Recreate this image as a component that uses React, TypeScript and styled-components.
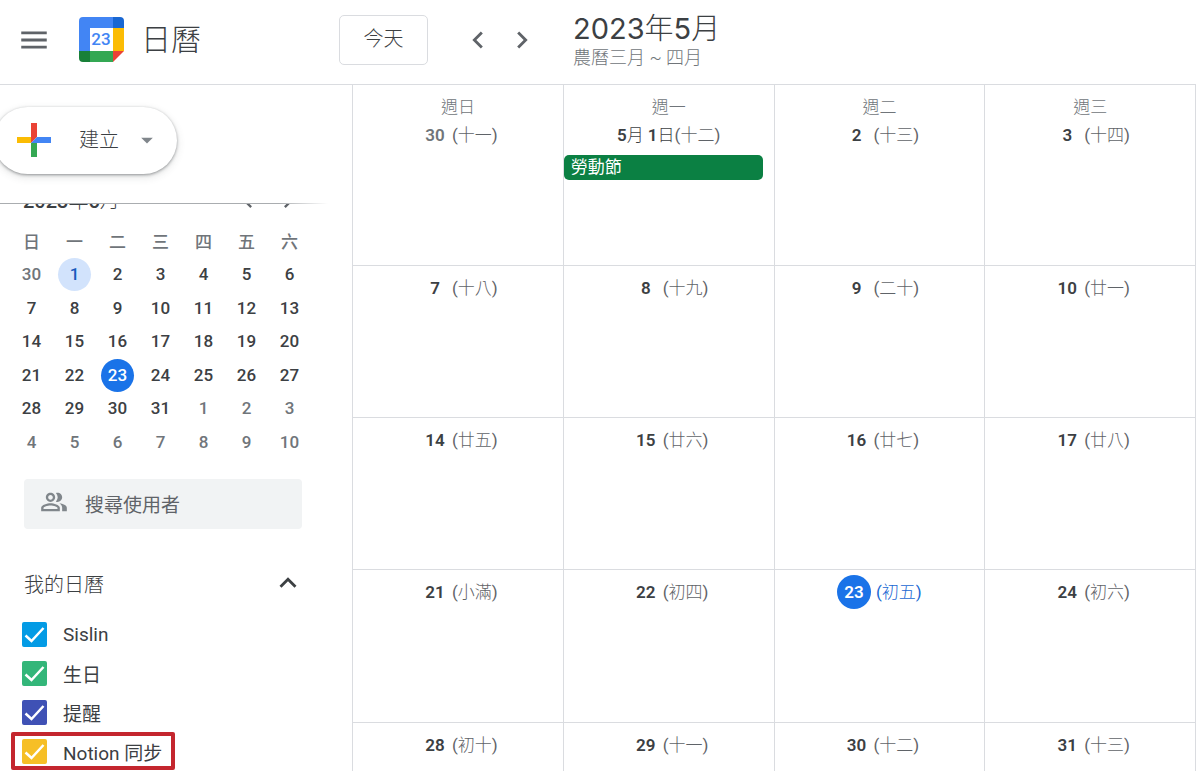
import React from "react";
import styled, { createGlobalStyle } from "styled-components";
import {
  MdArrowDropDown,
  MdChevronLeft,
  MdChevronRight,
  MdKeyboardArrowUp,
  MdMenu,
  MdOutlinePeopleAlt,
} from "react-icons/md";

const color = {
  text: "#3c4043",
  muted: "#70757a",
  icon: "#5f6368",
  line: "#dadce0",
  blue: "#1a73e8",
  holiday: "#0b8043",
};

const GlobalStyle = createGlobalStyle`
  *, *::before, *::after { box-sizing: border-box; }
  body {
    margin: 0;
    background: #fff;
    color: ${color.text};
    font-family: Roboto, "Noto Sans CJK TC", sans-serif;
    font-size: 17px;
  }
  button, input { font: inherit; color: inherit; }
  h1, h2, p, ul { margin: 0; padding: 0; font-weight: 400; }
`;

const Page = styled.div`
  display: flex;
  flex-direction: column;
  height: 100vh;
  overflow: hidden;
`;

/* Top bar */

const TopBar = styled.header`
  display: flex;
  align-items: center;
  flex: none;
  height: 85px;
  padding-bottom: 5px;
  border-bottom: 1px solid ${color.line};
`;

const Brand = styled.div`
  display: flex;
  align-items: center;
  flex: 0 0 339px;
  padding-left: 17px;
`;

const IconButton = styled.button<{ $tone?: string }>`
  display: flex;
  align-items: center;
  justify-content: center;
  padding: 0;
  border: 0;
  background: none;
  color: ${(p) => p.$tone ?? color.icon};
  cursor: pointer;
`;

const LogoMark = styled.svg`
  width: 45px;
  height: 45px;
  margin: 0 17px 0 28px;
`;

const BrandName = styled.span`
  font-size: 30px;
  line-height: 40px;
  font-weight: 300;
`;

const TodayButton = styled.button`
  width: 89px;
  height: 50px;
  padding: 0 0 4px;
  border: 1px solid ${color.line};
  border-radius: 5px;
  background: #fff;
  font-size: 20px;
  font-weight: 300;
  cursor: pointer;
`;

const Pager = styled.nav`
  display: flex;
  gap: 10px;
  margin: 0 34px 0 33px;
`;

const Heading = styled.div`
  display: flex;
  flex-direction: column;
`;

const MonthTitle = styled.h1`
  font-family: Inter, "Noto Sans CJK TC", sans-serif;
  font-size: 29px;
  line-height: 36px;

  span { font-weight: 300; }
`;

const LunarTitle = styled.p`
  color: ${color.muted};
  font-size: 18px;
  line-height: 22px;
  font-weight: 300;
`;

/* Body */

const Body = styled.div`
  display: flex;
  flex: 1;
  min-height: 0;
`;

const Sidebar = styled.aside`
  display: flex;
  flex-direction: column;
  flex: 0 0 352px;
  overflow: hidden;
`;

const CreateArea = styled.div`
  flex: none;
  padding: 22px 0 29px;
`;

const CreateButton = styled.button`
  display: flex;
  align-items: center;
  width: 183px;
  height: 67px;
  margin-left: -6px;
  padding: 0 16px 2px 23px;
  border: 0;
  border-radius: 34px;
  background: #fff;
  box-shadow: 0 1px 3px rgba(60, 64, 67, 0.5), 0 3px 8px rgba(60, 64, 67, 0.15);
  font-size: 20px;
  font-weight: 300;
  cursor: pointer;

  span { flex: 1; padding: 0 0 3px 28px; text-align: left; }
`;

const ScrollEdge = styled.div`
  flex: none;
  width: 328px;
  height: 1px;
  background: linear-gradient(to right, #aaadb0 85%, transparent);
`;

const ScrollArea = styled.div`
  flex: 1;
  min-height: 0;
  overflow: hidden;
`;

const MiniHeader = styled.div`
  display: flex;
  align-items: center;
  height: 34px;
  margin: -20px 50px 8px 23px;
`;

const MiniTitle = styled.h2`
  flex: 1;
  font-size: 20px;
  line-height: 34px;
  font-weight: 500;

  span { font-weight: 300; }
`;

const MiniPager = styled.div`
  display: flex;
  gap: 12px;
`;

const MiniTable = styled.table`
  width: 301px;
  margin-left: 10px;
  table-layout: fixed;
  border-spacing: 0;
  text-align: center;

  th, td { padding: 0; }
  th {
    height: 32px;
    color: ${color.muted};
    font-weight: 500;
    line-height: 32px;
  }
  td { height: 33px; line-height: 33px; }
  tbody tr:nth-child(even) td { height: 34px; }
`;

const MiniDay = styled.span<{ $kind: "in" | "out" | "first" | "today" }>`
  display: block;
  width: 33px;
  height: 33px;
  margin: 0 auto;
  border-radius: 50%;
  font-weight: 500;
  color: ${(p) =>
    ({ in: color.text, out: color.muted, first: "#185abc", today: "#fff" })[p.$kind]};
  background: ${(p) =>
    ({ in: "none", out: "none", first: "#d2e3fc", today: color.blue })[p.$kind]};
`;

const SearchBox = styled.label`
  display: flex;
  align-items: center;
  height: 50px;
  margin: 20px 50px 0 24px;
  padding-left: 16px;
  border-radius: 4px;
  background: #f1f3f4;
  color: #80868b;

  svg { margin-bottom: 4px; }
`;

const SearchInput = styled.input`
  flex: 1;
  min-width: 0;
  margin-left: 17px;
  padding: 2px 0 0;
  border: 0;
  outline: 0;
  background: none;
  color: ${color.text};
  font-size: 19px;

  &::placeholder { color: ${color.icon}; opacity: 1; }
`;

const SectionHeader = styled.div`
  display: flex;
  align-items: center;
  justify-content: space-between;
  height: 40px;
  margin: 34px 47px 12px 24px;
`;

const SectionTitle = styled.h2`
  font-size: 20px;
  font-weight: 300;
`;

const CalendarList = styled.ul`
  list-style: none;
`;

const CalendarItem = styled.li<{ $marked?: boolean }>`
  position: relative;
  height: 39px;
  padding-left: 22px;

  &::after {
    content: "";
    display: ${(p) => (p.$marked ? "block" : "none")};
    position: absolute;
    top: 0;
    left: 11px;
    width: 164px;
    height: 38px;
    border: 4px solid #c4262e;
    border-radius: 2px;
    pointer-events: none;
  }
`;

const CalendarLabel = styled.label`
  display: inline-flex;
  align-items: center;
  gap: 16px;
  height: 39px;
  font-size: 19px;
  cursor: pointer;
`;

const CheckWrap = styled.span`
  display: grid;
  width: 25px;
  height: 25px;

  > * { grid-area: 1 / 1; }
  svg { width: 25px; height: 25px; pointer-events: none; }
`;

const CheckInput = styled.input<{ $fill: string }>`
  appearance: none;
  width: 25px;
  height: 25px;
  margin: 0;
  border: 2px solid ${(p) => p.$fill};
  border-radius: 2px;

  &:checked { background: ${(p) => p.$fill}; }
  &:not(:checked) + svg { visibility: hidden; }
`;

/* Month grid */

const MonthArea = styled.main`
  flex: 1;
  min-width: 0;
  overflow: hidden;
`;

const MonthTable = styled.table`
  width: 100%;
  table-layout: fixed;
  border-spacing: 0;
  border-right: 1px solid ${color.line};
`;

const DayCell = styled.td<{ $first?: boolean }>`
  height: ${(p) => (p.$first ? 181 : 152)}px;
  padding: 5px 0 0;
  border-left: 1px solid ${color.line};
  border-bottom: 1px solid ${color.line};
  vertical-align: top;

  tr:nth-child(4) & { height: 153px; }
`;

const Weekday = styled.div`
  height: 28px;
  line-height: 34px;
  color: ${color.muted};
  text-align: center;
  font-weight: 300;
`;

const DateLine = styled.div<{ $today?: boolean }>`
  display: flex;
  justify-content: center;
  gap: ${(p) => (p.$today ? 5 : 0)}px;
  height: 34px;
  line-height: 34px;
  color: ${(p) => (p.$today ? "#1967d2" : color.icon)};
`;

const DayNumber = styled.span<{ $kind: "in" | "out" | "long" | "today" }>`
  width: ${(p) => (p.$kind === "long" ? "auto" : "34px")};
  height: 34px;
  border-radius: 50%;
  text-align: center;
  font-weight: 600;
  color: ${(p) =>
    p.$kind === "out" ? color.muted : p.$kind === "today" ? "#fff" : color.text};
  background: ${(p) => (p.$kind === "today" ? color.blue : "none")};

  span { font-weight: 300; }
`;

const Lunar = styled.span`
  span { font-weight: 300; }
`;

const EventChip = styled.button`
  display: block;
  width: calc(100% - 11px);
  height: 25px;
  margin-top: 3px;
  padding: 0 7px 1px;
  border: 0;
  border-radius: 5px;
  background: ${color.holiday};
  color: #fff;
  line-height: 24px;
  text-align: left;
  cursor: pointer;
`;

const weekdays = ["日", "一", "二", "三", "四", "五", "六"];

const miniWeeks = [
  [30, 1, 2, 3, 4, 5, 6],
  [7, 8, 9, 10, 11, 12, 13],
  [14, 15, 16, 17, 18, 19, 20],
  [21, 22, 23, 24, 25, 26, 27],
  [28, 29, 30, 31, 1, 2, 3],
  [4, 5, 6, 7, 8, 9, 10],
];

function miniKind(week: number, day: number) {
  if ((week === 0 && day > 6) || (week > 3 && day < 20)) return "out";
  if (week === 0 && day === 1) return "first";
  return day === 23 ? "today" : "in";
}

type Day = {
  date: React.ReactNode;
  lunar: string;
  kind?: "out" | "long" | "today";
  event?: string;
};

const firstOfMay = (
  <>
    5<span>月</span> 1<span>日</span>
  </>
);

const monthWeeks: Day[][] = [
  [
    { date: "30", lunar: "十一", kind: "out" },
    { date: firstOfMay, lunar: "十二", kind: "long", event: "勞動節" },
    { date: "2", lunar: "十三" },
    { date: "3", lunar: "十四" },
  ],
  [
    { date: "7", lunar: "十八" },
    { date: "8", lunar: "十九" },
    { date: "9", lunar: "二十" },
    { date: "10", lunar: "廿一" },
  ],
  [
    { date: "14", lunar: "廿五" },
    { date: "15", lunar: "廿六" },
    { date: "16", lunar: "廿七" },
    { date: "17", lunar: "廿八" },
  ],
  [
    { date: "21", lunar: "小滿" },
    { date: "22", lunar: "初四" },
    { date: "23", lunar: "初五", kind: "today" },
    { date: "24", lunar: "初六" },
  ],
  [
    { date: "28", lunar: "初十" },
    { date: "29", lunar: "十一" },
    { date: "30", lunar: "十二" },
    { date: "31", lunar: "十三" },
  ],
];

const calendars = [
  { name: "Sislin", fill: "#039be5" },
  { name: "生日", fill: "#33b679" },
  { name: "提醒", fill: "#3f51b5" },
  { name: "Notion 同步", fill: "#f6bf26", marked: true },
];

function Logo() {
  return (
    <LogoMark viewBox="0 0 45 45" aria-hidden="true">
      <path d="M4 0H34V11H11V34H0V4A4 4 0 0 1 4 0Z" fill="#4285f4" />
      <path d="M34 0H41A4 4 0 0 1 45 4V11H34Z" fill="#1967d2" />
      <path d="M34 11H45V34H34Z" fill="#fbbc04" />
      <path d="M11 34H34V45H11Z" fill="#34a853" />
      <path d="M0 34H11V45H4A4 4 0 0 1 0 41Z" fill="#188038" />
      <path d="M34 34H45L34 45Z" fill="#ea4335" />
      <text x="22" y="28" textAnchor="middle" fontSize="17" fontWeight="500" fill="#4285f4">
        23
      </text>
    </LogoMark>
  );
}

function PlusMark() {
  return (
    <svg width="34" height="34" viewBox="0 0 34 34" aria-hidden="true">
      <path d="M14 0H20V14L14 20Z" fill="#ea4335" />
      <path d="M0 14H14V20H0Z" fill="#fbbc04" />
      <path d="M20 14H34V20H14Z" fill="#4285f4" />
      <path d="M14 20H20V34H14Z" fill="#34a853" />
    </svg>
  );
}

function CheckRow({ name, fill, marked }: { name: string; fill: string; marked?: boolean }) {
  return (
    <CalendarItem $marked={marked}>
      <CalendarLabel>
        <CheckWrap>
          <CheckInput type="checkbox" defaultChecked $fill={fill} />
          <svg viewBox="0 0 25 25" aria-hidden="true">
            <path d="M3.500 13.500L9.500 19L21.500 6" fill="none" stroke="#fff" strokeWidth="2.500" />
          </svg>
        </CheckWrap>
        {name}
      </CalendarLabel>
    </CalendarItem>
  );
}

export default function App() {
  return (
    <Page>
      <GlobalStyle />
      <TopBar>
        <Brand>
          <IconButton aria-label="主選單">
            <MdMenu size={34} />
          </IconButton>
          <Logo />
          <BrandName>日曆</BrandName>
        </Brand>
        <TodayButton>今天</TodayButton>
        <Pager>
          <IconButton aria-label="上個月">
            <MdChevronLeft size={34} />
          </IconButton>
          <IconButton aria-label="下個月">
            <MdChevronRight size={34} />
          </IconButton>
        </Pager>
        <Heading>
          <MonthTitle>
            2023<span>年</span>5<span>月</span>
          </MonthTitle>
          <LunarTitle>農曆三月 ~ 四月</LunarTitle>
        </Heading>
      </TopBar>
      <Body>
        <Sidebar>
          <CreateArea>
            <CreateButton>
              <PlusMark />
              <span>建立</span>
              <MdArrowDropDown size={28} color="#80868b" />
            </CreateButton>
          </CreateArea>
          <ScrollEdge />
          <ScrollArea>
            <MiniHeader>
              <MiniTitle>
                2023<span>年</span>5<span>月</span>
              </MiniTitle>
              <MiniPager>
                <IconButton aria-label="上個月">
                  <MdChevronLeft size={28} />
                </IconButton>
                <IconButton aria-label="下個月">
                  <MdChevronRight size={28} />
                </IconButton>
              </MiniPager>
            </MiniHeader>
            <MiniTable>
              <thead>
                <tr>
                  {weekdays.map((d) => (
                    <th key={d} scope="col">{d}</th>
                  ))}
                </tr>
              </thead>
              <tbody>
                {miniWeeks.map((week, w) => (
                  <tr key={w}>
                    {week.map((day) => (
                      <td key={day}>
                        <MiniDay $kind={miniKind(w, day)}>{day}</MiniDay>
                      </td>
                    ))}
                  </tr>
                ))}
              </tbody>
            </MiniTable>
            <SearchBox>
              <MdOutlinePeopleAlt size={28} />
              <SearchInput type="text" placeholder="搜尋使用者" aria-label="搜尋使用者" />
            </SearchBox>
            <SectionHeader>
              <SectionTitle>我的日曆</SectionTitle>
              <IconButton aria-label="收合我的日曆" $tone={color.text}>
                <MdKeyboardArrowUp size={34} />
              </IconButton>
            </SectionHeader>
            <CalendarList>
              {calendars.map((c) => (
                <CheckRow key={c.name} {...c} />
              ))}
            </CalendarList>
          </ScrollArea>
        </Sidebar>
        <MonthArea>
          <MonthTable>
            <tbody>
              {monthWeeks.map((week, w) => (
                <tr key={w}>
                  {week.map((day, i) => (
                    <DayCell key={i} $first={w === 0}>
                      {w === 0 && <Weekday>週{weekdays[i]}</Weekday>}
                      <DateLine $today={day.kind === "today"}>
                        <DayNumber $kind={day.kind ?? "in"}>{day.date}</DayNumber>
                        <Lunar>
                          (<span>{day.lunar}</span>)
                        </Lunar>
                      </DateLine>
                      {day.event && <EventChip>{day.event}</EventChip>}
                    </DayCell>
                  ))}
                </tr>
              ))}
            </tbody>
          </MonthTable>
        </MonthArea>
      </Body>
    </Page>
  );
}
